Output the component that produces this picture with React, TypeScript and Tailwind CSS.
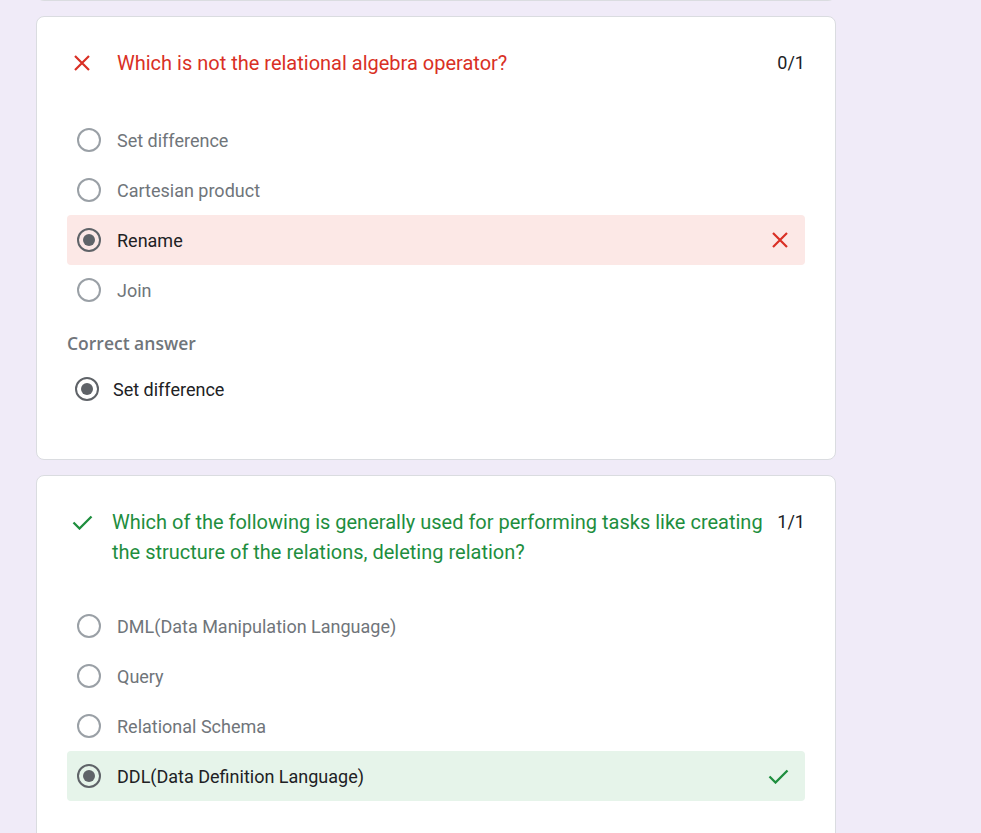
import React from "react";

type Opt = { label: string; state?: "wrong" | "right" };

const q1: Opt[] = [
  { label: "Set difference" },
  { label: "Cartesian product" },
  { label: "Rename", state: "wrong" },
  { label: "Join" },
];

const q2: Opt[] = [
  { label: "DML(Data Manipulation Language)" },
  { label: "Query" },
  { label: "Relational Schema" },
  { label: "DDL(Data Definition Language)", state: "right" },
];

const CloseIcon = ({ size = 18 }: { size?: number }) => (
  <svg width={size} height={size} viewBox="0 0 18 18" fill="none">
    <path d="M2 2L16 16M16 2L2 16" stroke="#d93025" strokeWidth="2.2" />
  </svg>
);

const CheckIcon = () => (
  <svg width="21" height="16" viewBox="0 0 21 16" fill="none">
    <path d="M1.5 8.5L7.5 14.5L19.5 2.5" stroke="#1e8e3e" strokeWidth="2.3" />
  </svg>
);

const Radio = ({ checked }: { checked?: boolean }) => (
  <span
    className={`flex items-center justify-center w-6 h-6 rounded-full border-2 shrink-0 ${
      checked ? "border-[#5f6368]" : "border-[#9aa0a6]"
    }`}
  >
    {checked && <span className="w-3 h-3 rounded-full bg-[#5f6368]" />}
  </span>
);

const OptionRow = ({ opt }: { opt: Opt }) => {
  const bg =
    opt.state === "wrong"
      ? "bg-[#fce8e6]"
      : opt.state === "right"
        ? "bg-[#e6f4ea]"
        : "";
  return (
    <div className={`flex items-center h-[50px] pl-[10px] pr-[16px] rounded ${bg}`}>
      <Radio checked={!!opt.state} />
      <span
        className={`ml-4 flex-1 text-[18px] ${
          opt.state ? "text-[#202124]" : "text-[#70757a]"
        }`}
      >
        {opt.label}
      </span>
      {opt.state === "wrong" && <CloseIcon size={18} />}
      {opt.state === "right" && <CheckIcon />}
    </div>
  );
};

export default function App() {
  return (
    <div className="min-h-screen bg-[#f0ebf8] pl-[36px] font-['Roboto','Liberation_Sans',sans-serif]">
      <div className="w-[800px] flex flex-col gap-[15px]">
        {/* tail of the previous question card */}
        <div className="h-2 -mt-[7px] bg-white border border-t-0 border-[#dadce0] rounded-b-lg" />

        {/* Question 1 - wrong */}
        <div className="bg-white border border-[#dadce0] rounded-lg px-[30px] pt-[31px] pb-[45px]">
          <div className="flex items-start">
            <div className="w-[50px] h-[30px] flex items-center pl-[6px] shrink-0">
              <CloseIcon size={18} />
            </div>
            <div className="flex-1 text-[20px] leading-[30px] text-[#d93025]">
              Which is not the relational algebra operator?
            </div>
            <div className="ml-3 text-[18px] leading-[30px] text-[#202124]">0/1</div>
          </div>

          <div className="mt-[37px] flex flex-col">
            {q1.map((o) => (
              <OptionRow key={o.label} opt={o} />
            ))}
          </div>

          <div className="mt-[18px] font-['Open_Sans','Roboto',sans-serif] text-[17.5px] leading-5 font-semibold text-[#70757a]">
            Correct answer
          </div>
          <div className="mt-[11px] flex items-center h-[50px] pl-[8px]">
            <Radio checked />
            <span className="ml-[14px] text-[18px] text-[#202124]">Set difference</span>
          </div>
        </div>

        {/* Question 2 - right */}
        <div className="bg-white border border-[#dadce0] rounded-lg px-[30px] pt-[31px] pb-[44px]">
          <div className="flex items-start">
            <div className="w-[45px] h-[30px] flex items-center pl-[5px] shrink-0">
              <CheckIcon />
            </div>
            <div className="flex-1 text-[20px] leading-[30px] text-[#1e8e3e]">
              Which of the following is generally used for performing tasks like creating the
              structure of the relations, deleting relation?
            </div>
            <div className="ml-3 text-[18px] leading-[30px] text-[#202124]">1/1</div>
          </div>

          <div className="mt-[34px] flex flex-col">
            {q2.map((o) => (
              <OptionRow key={o.label} opt={o} />
            ))}
          </div>
        </div>
      </div>
    </div>
  );
}
